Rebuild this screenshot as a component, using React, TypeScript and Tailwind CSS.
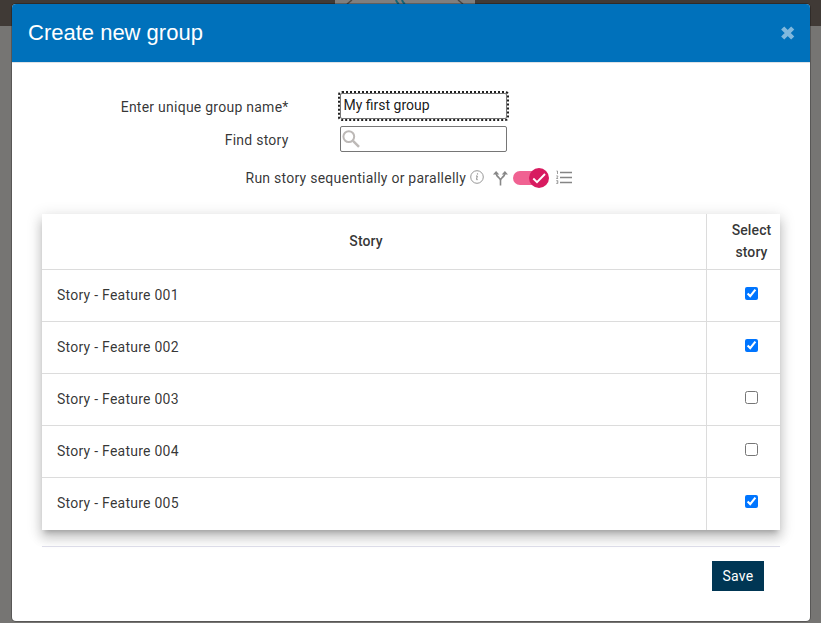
import { useState } from "react";

const initialStories = [
  { name: "Story - Feature 001", selected: true },
  { name: "Story - Feature 002", selected: true },
  { name: "Story - Feature 003", selected: false },
  { name: "Story - Feature 004", selected: false },
  { name: "Story - Feature 005", selected: true },
];

function Backdrop() {
  return (
    <div className="absolute inset-0 bg-[#767573]">
      <div className="h-[26px] bg-[#403a36] pl-[335px]">
        <svg width="140" height="4" viewBox="0 0 140 4" fill="none">
          <rect width="140" height="4" fill="#807f7e" />
          <path d="M12 4 17 0M123 0l5 4" stroke="#4b4846" strokeWidth="1.5" />
          <path d="M61 0q1 3 3 4M67 0q1 3 3 4" stroke="#176474" strokeWidth="2" />
        </svg>
      </div>
    </div>
  );
}

function InfoIcon() {
  return (
    <svg width="14" height="14" viewBox="0 0 14 14" fill="none" stroke="#8c8c8c">
      <circle cx="7" cy="7" r="6.3" strokeWidth="0.9" />
      <path d="M6 6h1.3L6.5 9.4q0 .7 1.2.2" strokeWidth="1" />
      <circle cx="7.5" cy="3.9" r=".7" fill="#8c8c8c" stroke="none" />
    </svg>
  );
}

function SplitIcon() {
  return (
    <svg width="16" height="16" viewBox="0 0 16 16" fill="none" stroke="#888" strokeWidth="1.6">
      <path d="M8.5 15.5V10.5Q8.5 9 7 7.8 4.1 6 4.1 2.5M8.5 10.5Q8.5 9 10 7.8 12.9 6 12.9 2.5" />
      <path d="M.9 4.4 4.1.9 7.3 4.4zM9.7 4.4 12.9.9 16 4.4z" fill="#888" stroke="none" />
    </svg>
  );
}

function ListIcon() {
  return (
    <svg width="16" height="14" viewBox="0 0 16 14" fill="none" stroke="#858585">
      <path d="M4 2.5h12M4 7.5h12M4 12.5h12" strokeWidth="1.4" />
      <path d="M.5 1h1v3M.3 5.9h1.4v1L.5 8.5h1.6M.3 10.6h1.5v2.9H.3M.7 12h1" strokeWidth=".8" />
    </svg>
  );
}

function Toggle() {
  const [on, setOn] = useState(true);
  return (
    <button
      role="switch"
      aria-checked={on}
      aria-label="Run sequentially"
      onClick={() => setOn(!on)}
      className={`flex h-5 w-9 items-center ${on ? "justify-end" : "justify-start"}`}
    >
      <span className="-mr-[18px] h-[14px] w-[34px] shrink-0 rounded-full bg-[#f06292]" />
      <span className="z-10 flex size-5 shrink-0 items-center justify-center rounded-full bg-[#d81b60]">
        <svg width="16" height="16" viewBox="0 0 16 16" fill="none" stroke="white" strokeWidth="1.9">
          <path d="m2.3 8.5 3.7 3.7 8-8.2" />
        </svg>
      </span>
    </button>
  );
}

function Checkbox({ checked, label, onChange }: { checked: boolean; label: string; onChange: () => void }) {
  return <input type="checkbox" aria-label={label} checked={checked} onChange={onChange} className="block size-[13px] accent-[#0075ff]" />;
}

export default function App() {
  const [groupName, setGroupName] = useState("My first group");
  const [search, setSearch] = useState("");
  const [stories, setStories] = useState(initialStories);
  const toggleStory = (index: number) =>
    setStories(stories.map((s, i) => (i === index ? { ...s, selected: !s.selected } : s)));

  return (
    <div className="relative h-[623px] w-[821px] overflow-hidden pt-1 pl-3 font-['Roboto',sans-serif] text-sm text-black/80">
      <Backdrop />
      <section className="relative h-[617px] w-[798px] overflow-hidden rounded-[4px] bg-white shadow-[0_0_0_1px_rgba(0,0,0,0.25)]">
        <header className="flex h-[59px] items-center justify-between border-b border-[#dee2e6] bg-[#0071bb] pr-[15px] pl-4">
          <h1 className="font-['Liberation_Sans',sans-serif] text-[22px] leading-[30px] text-white">Create new group</h1>
          <button aria-label="Close">
            <svg width="15" height="14" viewBox="0 0 15 14" stroke="#80b8dd" strokeWidth="4.4">
              <path d="m2.7 2 10 10M12.7 2l-10 10" />
            </svg>
          </button>
        </header>

        <div className="px-[30px] pt-[30px]">
          <div className="flex h-[26px] items-center">
            <label htmlFor="group" className="w-[246.6px] pt-[2px] text-right tracking-[0.25px]">Enter unique group name*</label>
            <input
              id="group"
              value={groupName}
              onChange={(e) => setGroupName(e.target.value)}
              className="ml-[51.4px] h-[26px] w-[167px] rounded-[2px] border border-[#767676] pr-[3px] pb-[3px] pl-[2.5px] text-black/90 outline-2 outline-dotted outline-[#202020]"
            />
          </div>
          <div className="mt-[7px] flex h-[26px] items-center">
            <label htmlFor="search" className="w-[246.6px] pt-[2px] text-right tracking-[0.25px]">Find story</label>
            <div className="ml-[51.4px] flex h-[26px] w-[167px] items-center rounded-[2px] border border-[#767676] pl-px">
              <svg width="18" height="18" viewBox="0 0 18 18" fill="none" stroke="#bdb9b7" strokeWidth="2">
                <circle cx="6.8" cy="6.6" r="5.4" />
                <path d="m11 10.8 6 6" strokeWidth="2.4" />
              </svg>
              <input id="search" value={search} onChange={(e) => setSearch(e.target.value)} className="min-w-0 flex-1 px-1 outline-none" />
            </div>
          </div>
          <div className="mt-4 flex h-5 items-center pl-[203.5px]">
            <span className="w-[224.5px] tracking-[0.25px] whitespace-nowrap">Run story sequentially or parallelly</span>
            <span className="-mt-[2px]"><InfoIcon /></span>
            <span className="ml-2 -mt-px"><SplitIcon /></span>
            <span className="ml-[5px]"><Toggle /></span>
            <span className="ml-[7px] -mt-[2px]"><ListIcon /></span>
          </div>

          <table className="mt-[26px] w-[738px] table-fixed border-separate border-spacing-0 bg-white shadow-[0_5px_5px_-3px_rgba(0,0,0,0.2),0_8px_10px_1px_rgba(0,0,0,0.14),0_3px_14px_2px_rgba(0,0,0,0.12)]">
            <colgroup>
              <col className="w-[665px]" />
              <col className="w-[73px]" />
            </colgroup>
            <thead>
              <tr className="h-[56px]">
                <th className="border-r border-b border-[#dcdcdc] p-0 pr-[16px] pb-[2px] text-center font-medium tracking-[0.1px]">Story</th>
                <th className="border-b border-[#dcdcdc] p-0 pb-[2px] pl-4 text-center leading-[22px] font-medium tracking-[0.1px]">Select story</th>
              </tr>
            </thead>
            <tbody>
              {stories.map((story, i) => {
                const line = i < stories.length - 1 ? "border-b border-[#dcdcdc]" : "";
                return (
                  <tr key={story.name} className="h-[52px]">
                    <td className={`border-r border-r-[#dcdcdc] p-0 pb-[2px] pl-[15px] tracking-[0.25px] ${line}`}>{story.name}</td>
                    <td className={`p-0 pb-[5px] pl-[38px] ${line}`}>
                      <Checkbox checked={story.selected} label={story.name} onChange={() => toggleStory(i)} />
                    </td>
                  </tr>
                );
              })}
            </tbody>
          </table>

          <footer className="mt-4 flex justify-end border-t border-[#dcdce8] pt-[14px] pr-4">
            <button className="h-[30px] w-[52px] bg-[#003654] text-sm tracking-[0.25px] text-white">Save</button>
          </footer>
        </div>
      </section>
    </div>
  );
}
